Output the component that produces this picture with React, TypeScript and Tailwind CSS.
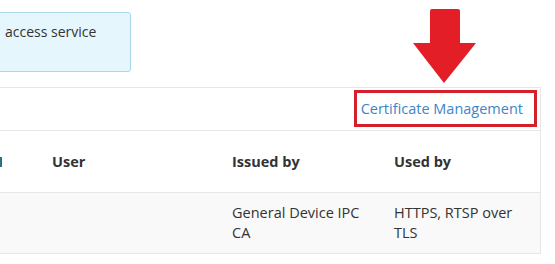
import React from "react";

const DownArrow = () => (
  <svg width="64" height="76" viewBox="0 0 64 76" className="absolute left-[413px] top-[8px]">
    <path d="M17 3 Q17 1 19 1 L45 1 Q47 1 47 3 L47 35 L63 35 L31 75 L0 35 L17 35 Z" fill="#e41e26" />
  </svg>
);

const App = () => {
  return (
    <div className="relative w-[555px] h-[264px] overflow-hidden bg-white text-[14.5px] text-[#333] font-['Open_Sans',sans-serif]">
      <div className="h-[87px] pt-[12px]">
        <div className="ml-[-10px] w-[141px] h-[60px] rounded-[3px] border border-[#a7d8ec] bg-[#e5f6fd] pl-[14px] pt-[9px] leading-5 text-[14px]">
          access service
        </div>
      </div>

      <div className="w-[541px] border-t border-r border-[#e6e6e6]">
        <div className="h-[42px] flex items-center justify-end pr-[17px]">
          <a className="text-[#3b86c6] leading-5">Certificate Management</a>
        </div>

        <div className="grid grid-cols-[52px_180px_162px_1fr] border-t border-[#e6e6e6] h-[62px] items-center font-bold">
          <div>
            <span className="block w-[2px] h-[10px] bg-[#2c6f86]" />
          </div>
          <div>User</div>
          <div>Issued by</div>
          <div>Used by</div>
        </div>

        <div className="grid grid-cols-[52px_180px_162px_1fr] border-t border-b border-[#e6e6e6] h-[62px] items-center bg-[#f9f9f9] leading-5">
          <div />
          <div />
          <div className="pr-[20px]">General Device IPC CA</div>
          <div className="pr-2">HTTPS, RTSP over TLS</div>
        </div>
      </div>

      <DownArrow />
      <div className="absolute left-[354px] top-[90px] w-[183px] h-[37px] border-[3px] border-[#d4202b]" />
    </div>
  );
};

export default App;
